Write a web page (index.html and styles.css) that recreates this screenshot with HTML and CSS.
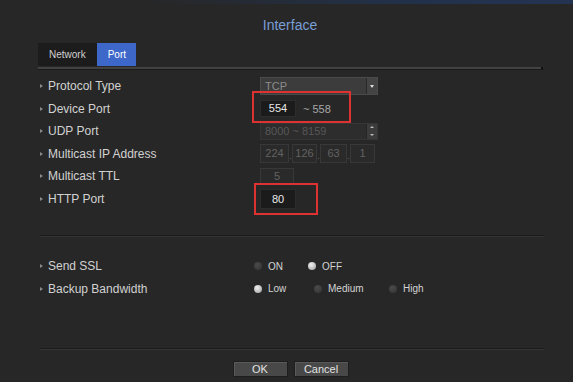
FILE: index.html
```html
<!DOCTYPE html>
<html lang="en">
<head>
  <meta charset="UTF-8" />
  <title>Interface - Port</title>
  <link rel="stylesheet" href="styles.css">
</head>
<body>
  <div class="topbar"></div>
  <h1 class="title">Interface</h1>

  <div class="panel">
    <div class="tabs">
      <div class="tab">Network</div>
      <div class="tab active">Port</div>
    </div>
    <div class="tabline"></div>

    <!-- port settings -->
    <div class="rows first">
      <div class="row">
        <div class="label"><span class="bullet"></span>Protocol Type</div>
        <div class="ctrl">
          <div class="select"><span class="select-text">TCP</span><span class="select-arrow"></span></div>
        </div>
      </div>
      <div class="row">
        <div class="label"><span class="bullet"></span>Device Port</div>
        <div class="ctrl">
          <div class="hl hl-device"></div>
          <div class="input">554</div>
          <span class="range">~ 558</span>
        </div>
      </div>
      <div class="row">
        <div class="label"><span class="bullet"></span>UDP Port</div>
        <div class="ctrl">
          <div class="spin"><span class="spin-text">8000 ~ 8159</span><span class="spin-btn"><i class="up"></i><i class="down"></i></span></div>
        </div>
      </div>
      <div class="row">
        <div class="label"><span class="bullet"></span>Multicast IP Address</div>
        <div class="ctrl ip">
          <div class="box w29">224</div><span class="dot">.</span>
          <div class="box w25">126</div><span class="dot">.</span>
          <div class="box w27">63</div><span class="dot">.</span>
          <div class="box w25">1</div>
        </div>
      </div>
      <div class="row">
        <div class="label"><span class="bullet"></span>Multicast TTL</div>
        <div class="ctrl">
          <div class="box ttl">5</div>
        </div>
      </div>
      <div class="row">
        <div class="label"><span class="bullet"></span>HTTP Port</div>
        <div class="ctrl">
          <div class="hl hl-http"></div>
          <div class="input tall">80</div>
        </div>
      </div>
    </div>

    <div class="sep"></div>

    <div class="rows second">
      <div class="row">
        <div class="label"><span class="bullet"></span>Send SSL</div>
        <div class="ctrl radios ssl">
          <label class="opt"><span class="radio"></span>ON</label>
          <label class="opt"><span class="radio on"></span>OFF</label>
        </div>
      </div>
      <div class="row">
        <div class="label"><span class="bullet"></span>Backup Bandwidth</div>
        <div class="ctrl radios bw">
          <label class="opt"><span class="radio on"></span>Low</label>
          <label class="opt"><span class="radio"></span>Medium</label>
          <label class="opt"><span class="radio"></span>High</label>
        </div>
      </div>
    </div>

    <div class="sep bottom"></div>

    <div class="buttons">
      <button class="btn">OK</button>
      <button class="btn">Cancel</button>
    </div>
  </div>
</body>
</html>
```

FILE: styles.css
```css
body {
  margin: 0;
  background: #272727;
  font-family: 'Liberation Sans', Arial, sans-serif;
  color: #d8d8d8;
  width: 573px;
  height: 382px;
  overflow: hidden;
}

.topbar {
  height: 4px;
  background: linear-gradient(to right, #272727 25%, #22314a 70%, #243352);
}

.title {
  margin: 0 0 10px;
  padding: 13px 0 0 7px;
  font-size: 14px;
  line-height: 16px;
  font-weight: normal;
  text-align: center;
  color: #7a9ed6;
}

.panel {
  margin: 0 30px 0 38px;
}

.tabs {
  display: flex;
  height: 23px;
}

.tab {
  padding: 0 11px;
  line-height: 23px;
  font-size: 10px;
  background: #1c1c1c;
  color: #d0d0d0;
}

.tab.active {
  padding: 0 10px 0 11px;
  background: #3d67c9;
  color: #fff;
}

.tabline {
  margin-top: 1px;
  height: 2px;
  background: #424242;
  border-bottom: 1px solid #1a1a1a;
  border-right: 2px solid #111;
}

.rows.first {
  padding-top: 4.75px;
}

.rows.second {
  margin-top: 18px;
}

.row {
  display: grid;
  grid-template-columns: 222px 1fr;
  height: 22.5px;
  align-items: center;
}

.label {
  display: flex;
  align-items: center;
  padding-left: 2px;
  font-size: 12px;
  color: #d2d2d2;
}

.bullet {
  width: 0;
  height: 0;
  border-left: 3px solid #8a8a8a;
  border-top: 2.5px solid transparent;
  border-bottom: 2.5px solid transparent;
  margin-right: 5px;
}

.ctrl {
  position: relative;
  display: flex;
  align-items: center;
  height: 100%;
  font-size: 11px;
}

.select {
  display: flex;
  width: 118px;
  height: 18px;
  box-sizing: border-box;
  background: #3c3c3c;
  border: 1px solid #4a4a4a;
}

.select-text {
  flex: 1;
  padding-left: 4px;
  line-height: 16px;
  color: #8c8c8c;
}

.select-arrow {
  position: relative;
  width: 10px;
  border-left: 1px solid #2a2a2a;
  background: #444;
}

.select-arrow::after {
  content: "";
  position: absolute;
  left: 3px;
  top: 7px;
  border-top: 3px solid #ddd;
  border-left: 2px solid transparent;
  border-right: 2px solid transparent;
}

.input {
  width: 36px;
  height: 17px;
  box-sizing: border-box;
  background: #1b1b1b;
  border: 1px solid #2c2c2c;
  text-align: center;
  line-height: 15px;
  color: #e8e8e8;
}

.input.tall {
  height: 20px;
  line-height: 18px;
}

.range {
  margin-left: 7px;
  color: #a8a8a8;
}

.spin {
  display: flex;
  width: 118px;
  height: 17px;
  box-sizing: border-box;
  background: #2d2d2d;
  border: 1px solid #353535;
}

.spin-text {
  flex: 1;
  padding-left: 4px;
  line-height: 15px;
  color: #575757;
}

.spin-btn {
  display: flex;
  flex-direction: column;
  justify-content: space-around;
  align-items: center;
  width: 10px;
  background: #3c3c3c;
  border-left: 1px solid #252525;
}

.spin-btn i {
  width: 0;
  height: 0;
  border-left: 2px solid transparent;
  border-right: 2px solid transparent;
}

.spin-btn .up {
  border-bottom: 2px solid #bbb;
}

.spin-btn .down {
  border-top: 2px solid #bbb;
}

.box {
  height: 19px;
  box-sizing: border-box;
  background: #2a2a2a;
  border: 1px solid #383838;
  text-align: center;
  line-height: 17px;
  color: #626262;
}

.w29 { width: 29px; }
.w27 { width: 27px; }
.w25 { width: 25px; }

.dot {
  width: 3px;
  align-self: flex-end;
  margin-bottom: 4px;
  font-size: 9px;
  color: #666;
  text-align: center;
}

.box.ttl {
  width: 34px;
  height: 16px;
  line-height: 14px;
}

.hl {
  position: absolute;
  border: 2px solid #dd3232;
  box-sizing: border-box;
}

.hl-device {
  left: -8px;
  top: -6.25px;
  width: 99px;
  height: 32px;
}

.hl-http {
  left: -6px;
  top: -4.25px;
  width: 64px;
  height: 32px;
}

.sep {
  margin: 25px 0 0 2px;
  width: 504px;
  border-top: 1px solid #1b1b1b;
  border-bottom: 1px solid #343434;
}

.sep.bottom {
  margin-top: 48px;
}

.radios {
  display: grid;
  margin-left: -6px;
}

.ssl {
  grid-template-columns: 54px 54px;
}

.bw {
  grid-template-columns: 60px 75px auto;
}

.opt {
  display: flex;
  align-items: center;
  font-size: 10px;
  color: #d4d4d4;
}

.radio {
  width: 8px;
  height: 8px;
  border-radius: 50%;
  margin-right: 6px;
  background: radial-gradient(circle at 40% 35%, #4a4a4a, #333);
}

.radio.on {
  background: radial-gradient(circle at 40% 35%, #f2f2f2, #9a9a9a);
}

.buttons {
  display: flex;
  justify-content: center;
  gap: 6px;
  margin-top: 11px;
}

.btn {
  width: 55px;
  height: 16px;
  padding: 0;
  background: #484848;
  border: 1px solid #1e1e1e;
  box-shadow: inset 1px 1px 0 #5a5a5a;
  font-family: 'Liberation Sans', Arial, sans-serif;
  font-size: 11px;
  line-height: 14px;
  color: #e2e2e2;
}
```
